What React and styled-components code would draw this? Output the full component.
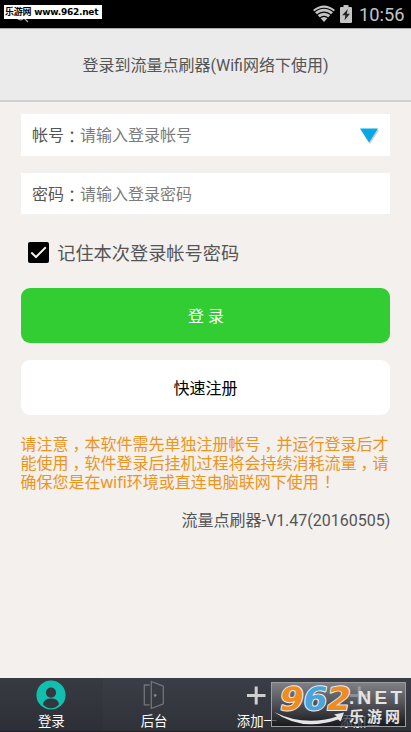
import styled, { createGlobalStyle } from 'styled-components';

const color = {
    pageColor: '#f3f0ed',
    headerColor: '#ebebeb',
    textColor: '#555555',
    hintColor: '#7c7c7c',
    greenColor: '#32cd32',
    orangeColor: '#ec941c',
    tealColor: '#10bfae',
};

const GlobalStyle = createGlobalStyle`
    * {
        box-sizing: border-box;
    }
    body {
        margin: 0;
        background-color: ${color.pageColor};
        font-family: Roboto, "Noto Sans CJK SC", sans-serif;
    }
`;

const Screen = styled.div`
    display: flex;
    flex-direction: column;
    width: 411px;
    height: 732px;
    overflow: hidden;
    color: ${color.textColor};
`;

const StatusBar = styled.div`
    position: relative;
    display: flex;
    align-items: center;
    justify-content: flex-end;
    height: 28px;
    flex-shrink: 0;
    padding-right: 6px;
    background-color: #000;
    color: #c4c4c4;
`;

const Clock = styled.span`
    width: 46px;
    margin-left: 7px;
    padding-top: 2px;
    font-size: 18.3px;
    line-height: 26px;
    white-space: nowrap;
`;

const SiteTag = styled.div`
    position: absolute;
    left: 4px;
    top: 5px;
    width: 98px;
    height: 14px;
    padding-left: 1px;
    background-color: #fff;
    color: #000;
    font: bold 9px/15px "DejaVu Sans", "Noto Sans CJK SC", sans-serif;
    letter-spacing: -0.25px;
    white-space: nowrap;
`;

const TagMark = styled.svg`
    position: absolute;
    left: 16px;
    top: 17px;
`;

const Header = styled.header`
    height: 74px;
    flex-shrink: 0;
    padding-top: 1px;
    border-top: 1px solid #aaa;
    border-bottom: 2px solid #d0d0d0;
    background-color: ${color.headerColor};
    font-size: 16px;
    line-height: 72px;
    text-align: center;
`;

const Content = styled.main`
    display: flex;
    flex: 1;
    flex-direction: column;
    padding: 12px 20.7px 0 20.5px;
`;

const Field = styled.label`
    display: flex;
    align-items: center;
    height: 41.5px;
    margin-bottom: 17px;
    padding: 3px 11px 0 11.4px;
    background-color: #fff;
    font-size: 16px;
    line-height: 24px;
`;

const Hint = styled.span`
    flex: 1;
    color: ${color.hintColor};
`;

const Colon = styled.span`
    font-family: "Noto Sans CJK TC", sans-serif;
    line-height: 20px;
`;

// full-width comma, moved to the middle of its cell
const Comma = styled.span`
    position: relative;
    left: 4px;

    &::after {
        content: "，";
    }
`;

const Mark = styled.span`
    position: relative;
    left: 5px;
`;

const Remember = styled.div`
    display: flex;
    align-items: center;
    height: 22px;
    margin: 10px 0 25px 7.5px;
    font-size: 18.2px;
    line-height: 22px;
`;

const RememberText = styled.span`
    padding-top: 3px;
`;

const CheckBox = styled.span`
    display: flex;
    width: 21px;
    height: 21px;
    margin-right: 8.2px;
    border-radius: 2px;
    background-color: #000;
`;

const Button = styled.button`
    height: 55px;
    margin: 0 0 17px;
    padding: ${props => props.$primary ? '0 0 1px 1px' : '0 0 2px'};
    border: 0;
    border-radius: 9px;
    background-color: ${props => props.$primary ? color.greenColor : '#fff'};
    color: ${props => props.$primary ? '#fff' : '#000'};
    font-family: inherit;
    font-size: 16px;
`;

const Notice = styled.div`
    margin: 3px -3px 0 0;
    color: ${color.orangeColor};
    font-family: "Noto Sans", "Noto Sans CJK SC", sans-serif;
    font-size: 16px;
`;

const NoticeLine = styled.div`
    height: 19px;
    line-height: 19px;
    white-space: nowrap;
`;

const Version = styled.div`
    margin-top: 17px;
    font-size: 16px;
    line-height: 24px;
    text-align: right;
`;

const TabBar = styled.nav`
    position: relative;
    display: flex;
    height: 54px;
    flex-shrink: 0;
    border-bottom: 1px solid #2a1f26;
    background: linear-gradient(#3b3e46, #30323a);
`;

const Tab = styled.div`
    display: flex;
    flex: 1;
    flex-direction: column;
    align-items: center;
    padding: 2px 0 0;
    background-color: ${props => props.$active ? 'rgba(0, 0, 0, 0.05)' : 'transparent'};
    color: #fff;
    font-size: 13.4px;
    line-height: 18px;

    svg {
        margin-bottom: 3px;
    }
`;

const Badge = styled.div`
    position: absolute;
    left: 271px;
    top: 4px;
    width: 135px;
    height: 45px;
    border: 1px solid #9b9da0;
    background: linear-gradient(rgba(150, 151, 154, 0.75), rgba(90, 91, 95, 0.7) 50%, rgba(15, 15, 18, 0.7));
`;

const BadgeArt = styled.svg`
    display: block;
    margin: -1px;
    overflow: visible;
    font-family: "Liberation Sans", "Noto Sans CJK SC", sans-serif;
    font-weight: bold;
`;

const WifiIcon = () => (
    <svg width="22" height="18" viewBox="0 0 22 18">
        <path d="M0 5Q11 -4 22 5L11 17Z" fill="#c4c4c4" />
        <path d="M1 7.3Q11 -0.7 21 7.3M3.5 10.2Q11 4 18.5 10.2M6.5 13.3Q11 9.5 15.5 13.3" fill="none" stroke="#000" strokeWidth="1.1" />
    </svg>
);

const BatterySvg = styled.svg`
    margin-left: 5px;
`;

const BatteryIcon = () => (
    <BatterySvg width="12" height="18" viewBox="0 0 12 18">
        <path d="M3.5 0H8.5V2H11Q12 2 12 3V17Q12 18 11 18H1Q0 18 0 17V3Q0 2 1 2H3.5Z" fill="#c4c4c4" />
        <path d="M7.8 4L2.2 10.2H5.4L4.5 15.2L10 8.8H6.8Z" fill="#222" />
    </BatterySvg>
);

const LoginIcon = () => (
    <svg width="30" height="30" viewBox="0 0 30 30">
        <circle cx="15" cy="15" r="14.6" fill={color.tealColor} />
        <circle cx="15" cy="12.6" r="5.1" fill="#34373f" />
        <path d="M7 24.3Q7.8 18.5 15 18.5T23 24.3Q20 28.3 15 28.3T7 24.3Z" fill="#34373f" />
    </svg>
);

const DoorIcon = () => (
    <svg width="30" height="30" viewBox="0 0 30 30">
        <g fill="none" stroke="#73757b" strokeWidth="1.3" strokeLinejoin="round">
            <path d="M10.5 5H5.3V24.8H10.5" />
            <path d="M12.3 1.5L24.3 6.2V23.8L12.3 28.5Z" />
        </g>
        <circle cx="16.2" cy="15.4" r="1.3" fill="#85878b" />
    </svg>
);

const PlusIcon = () => (
    <svg width="30" height="30" viewBox="0 0 30 30">
        <path d="M5 15.5H23.5M14.2 6.5V24.5" stroke="#cfcfd0" strokeWidth="3" />
    </svg>
);

const tabs = [
    { key: 'login', label: '登录', Icon: LoginIcon },
    { key: 'back', label: '后台', Icon: DoorIcon },
    { key: 'add1', label: '添加一', Icon: PlusIcon },
    { key: 'add2', label: '添加二', Icon: PlusIcon },
];

const digits = [
    { digit: '9', x: 11, fill: '#ee8b22' },
    { digit: '6', x: 34.5, fill: '#4ba3dc' },
    { digit: '2', x: 58, fill: '#ee8b22' },
];

const SiteBadge = () => (
    <Badge>
        <BadgeArt width="135" height="45" viewBox="0 0 135 45">
            <g transform="translate(0 27.5) skewX(-10)" fontFamily="DejaVu Sans" fontSize="32" stroke="#eee" strokeWidth="2" strokeLinejoin="round" paintOrder="stroke">
                {digits.map(({ digit, x, fill }) =>
                    <text key={digit} x={x - 4} y="0" fill={fill} textLength="24" lengthAdjust="spacingAndGlyphs">{digit}</text>)
                }
            </g>
            <path d="M3 30Q34 45 66 34.5L63 32.5L73 30.5L69.5 39.5L67 37.5Q31 50 3 30Z" fill="#e5e5e5" />
            <text x="78" y="22" fontSize="19" fill="#e4e4e4" textLength="53">.NET</text>
            <text x="78" y="40" fontSize="15" fill="#e4e4e4" textLength="51">乐游网</text>
        </BadgeArt>
    </Badge>
);

const App = () => {
    return (
        <Screen>
            <GlobalStyle />
            <StatusBar>
                <TagMark width="14" height="6" viewBox="0 0 14 6">
                    <path d="M1 1Q4 4 7 2M8 1L12 5" fill="none" stroke="#aaa" strokeWidth="1.3" />
                </TagMark>
                <SiteTag>乐游网 www.962.net</SiteTag>
                <WifiIcon />
                <BatteryIcon />
                <Clock>10:56</Clock>
            </StatusBar>
            <Header>登录到流量点刷器(Wifi网络下使用)</Header>
            <Content>
                <Field>
                    帐号<Colon>：</Colon>
                    <Hint>请输入登录帐号</Hint>
                    <svg width="20" height="18" viewBox="0 0 20 18">
                        <path d="M2 3H20L11 17Z" fill="#ccc" />
                        <path d="M1 1.5H19L10 15.5Z" fill="#08a8e8" />
                    </svg>
                </Field>
                <Field>
                    密码<Colon>：</Colon>
                    <Hint>请输入登录密码</Hint>
                </Field>
                <Remember>
                    <CheckBox>
                        <svg width="21" height="21" viewBox="0 0 21 21">
                            <path d="M3.3 10.5L8 15L17.8 5.2" fill="none" stroke="#f3f0ed" strokeWidth="2" />
                        </svg>
                    </CheckBox>
                    <RememberText>记住本次登录帐号密码</RememberText>
                </Remember>
                <Button $primary>登 录</Button>
                <Button>快速注册</Button>
                <Notice>
                    <NoticeLine>请注意<Comma />本软件需先单独注册帐号<Comma />并运行登录后才</NoticeLine>
                    <NoticeLine>能使用<Comma />软件登录后挂机过程将会持续消耗流量<Comma />请</NoticeLine>
                    <NoticeLine>确保您是在wifi环境或直连电脑联网下使用<Mark>！</Mark></NoticeLine>
                </Notice>
                <Version>流量点刷器-V1.47(20160505)</Version>
            </Content>
            <TabBar>
                {tabs.map(({ key, label, Icon }) =>
                    <Tab key={key} $active={key === 'login'}>
                        <Icon />
                        {label}
                    </Tab>)
                }
                <SiteBadge />
            </TabBar>
        </Screen>
    );
};

export default App;
